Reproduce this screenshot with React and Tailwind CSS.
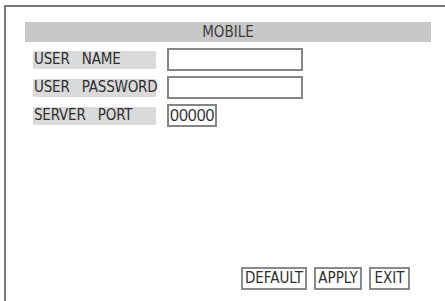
import React from 'react';

const font = { fontFamily: '"DejaVu Sans Condensed", "DejaVu Sans", sans-serif' };

const rows = [
  { label: 'USER\u00a0\u00a0\u00a0NAME', width: 'w-[136px]', value: '' },
  { label: 'USER\u00a0\u00a0\u00a0PASSWORD', width: 'w-[136px]', value: '' },
  { label: 'SERVER\u00a0\u00a0\u00a0PORT', width: 'w-[50px]', value: '00000' },
];

const Button = ({ children, w }) => (
  <div className={`${w} h-[23px] border-2 border-[#8a8a8a] bg-white flex items-center justify-center text-[15px] text-[#2e2e2e] leading-none`}>
    {children}
  </div>
);

export default function App() {
  return (
    <div className="w-[445px] h-[301px] bg-white overflow-hidden" style={font}>
      <div className="ml-[4px] mt-[5px] h-[296px] border-t-2 border-l-2 border-[#7a7a7a] flex flex-col">
        {/* titulo */}
        <div className="ml-[19px] mt-[15px] w-[406px] h-[20px] bg-[#c8c8c8] flex items-center justify-center text-[15px] text-[#3c3c3c] leading-none">
          MOBILE
        </div>

        <div className="ml-[27px] mt-[6px] flex flex-col gap-[5px]">
          {rows.map((r) => (
            <div key={r.label} className="flex items-center h-[23px]">
              <div className="w-[123px] h-[18px] bg-[#dadada] flex items-center pl-[1px] text-[15px] tracking-[-0.2px] text-[#2e2e2e] leading-none whitespace-nowrap">
                {r.label}
              </div>
              <div
                className={`${r.width} h-[23px] ml-[11px] border-2 border-[#858585] bg-white flex items-center pl-[1px] text-[16px] text-[#333] leading-none`}
                style={{ fontFamily: '"Liberation Sans", Arial, sans-serif' }}
              >
                {r.value}
              </div>
            </div>
          ))}
        </div>

        <div className="mt-auto mb-[11px] flex justify-end gap-[7px] pr-[35px]">
          <Button w="w-[66px]">DEFAULT</Button>
          <Button w="w-[48px]">APPLY</Button>
          <Button w="w-[41px]">EXIT</Button>
        </div>
      </div>
    </div>
  );
}
